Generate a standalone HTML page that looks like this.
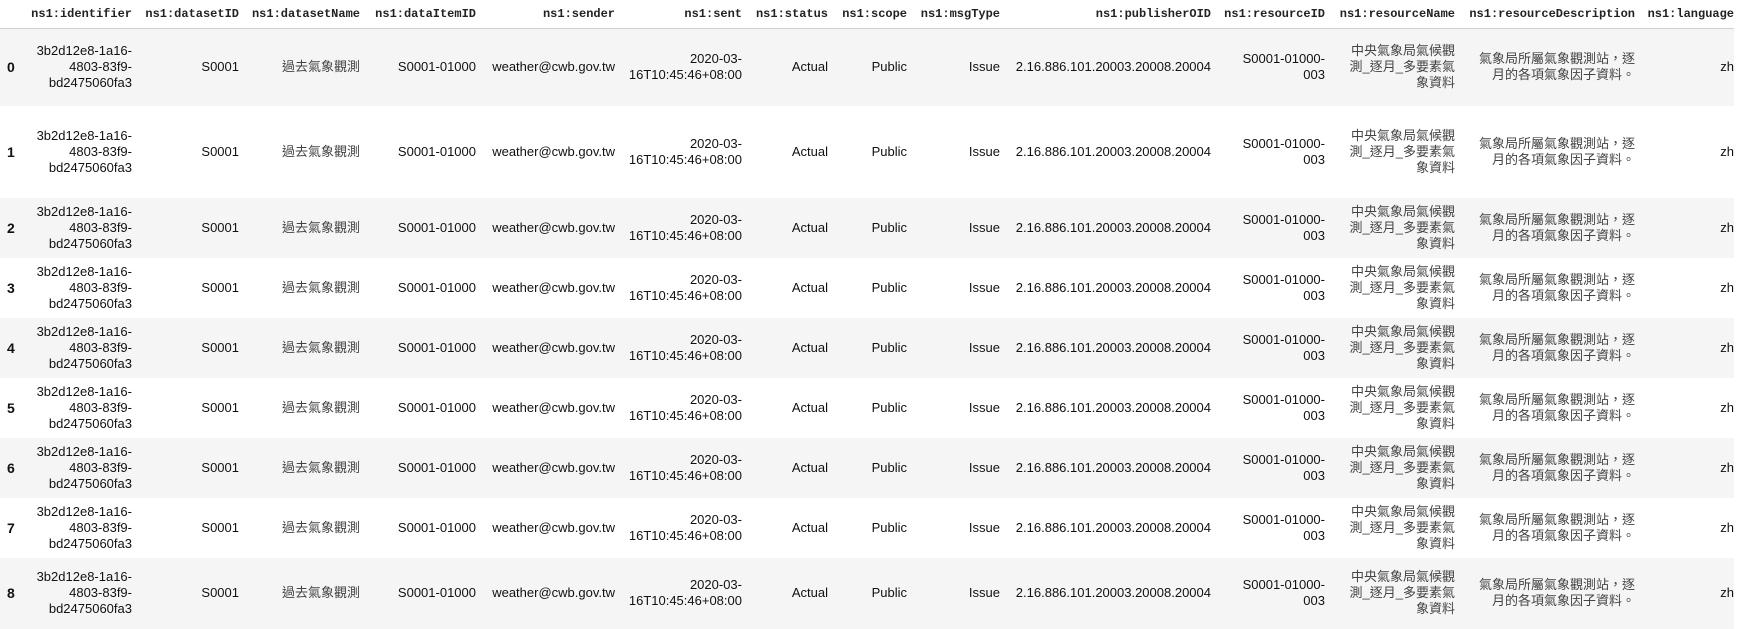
<!DOCTYPE html>
<html><head><meta charset="utf-8"><style>
body{margin:0;background:#fff;width:1745px;height:628px;overflow:hidden}
table{border-collapse:collapse;table-layout:fixed;width:1734px;font-family:"Liberation Sans","Noto Sans CJK TC",sans-serif;font-size:13px;line-height:16px;color:#111}
th{font-family:"Liberation Mono",monospace;font-size:12px;font-weight:bold;text-align:right;height:28px;padding:0;white-space:nowrap;border-bottom:1px solid #d0d0d0;vertical-align:middle;color:#222}
td{text-align:right;padding:0;white-space:nowrap;vertical-align:middle}
td.i{text-align:left;padding-left:7px;font-weight:bold;font-size:14px}
tbody tr:nth-child(odd){background:#f5f5f5}
.c{font-size:13px;color:#444}
</style></head><body>
<table>
<colgroup><col style="width:20px"><col style="width:112px"><col style="width:107px"><col style="width:121px"><col style="width:116px"><col style="width:139px"><col style="width:127px"><col style="width:86px"><col style="width:79px"><col style="width:93px"><col style="width:211px"><col style="width:114px"><col style="width:130px"><col style="width:180px"><col style="width:99px"></colgroup>
<thead><tr><th></th><th>ns1:identifier</th><th>ns1:datasetID</th><th>ns1:datasetName</th><th>ns1:dataItemID</th><th>ns1:sender</th><th>ns1:sent</th><th>ns1:status</th><th>ns1:scope</th><th>ns1:msgType</th><th>ns1:publisherOID</th><th>ns1:resourceID</th><th>ns1:resourceName</th><th>ns1:resourceDescription</th><th>ns1:language</th></tr></thead>
<tbody>
<tr style="height:77px"><td class="i">0</td><td>3b2d12e8-1a16-<br>4803-83f9-<br>bd2475060fa3</td><td>S0001</td><td class="c">過去氣象觀測</td><td>S0001-01000</td><td>weather@cwb.gov.tw</td><td>2020-03-<br>16T10:45:46+08:00</td><td>Actual</td><td>Public</td><td>Issue</td><td>2.16.886.101.20003.20008.20004</td><td>S0001-01000-<br>003</td><td class="c">中央氣象局氣候觀<br>測_逐月_多要素氣<br>象資料</td><td class="c">氣象局所屬氣象觀測站，逐<br>月的各項氣象因子資料。</td><td>zh</td></tr>
<tr style="height:92px"><td class="i">1</td><td>3b2d12e8-1a16-<br>4803-83f9-<br>bd2475060fa3</td><td>S0001</td><td class="c">過去氣象觀測</td><td>S0001-01000</td><td>weather@cwb.gov.tw</td><td>2020-03-<br>16T10:45:46+08:00</td><td>Actual</td><td>Public</td><td>Issue</td><td>2.16.886.101.20003.20008.20004</td><td>S0001-01000-<br>003</td><td class="c">中央氣象局氣候觀<br>測_逐月_多要素氣<br>象資料</td><td class="c">氣象局所屬氣象觀測站，逐<br>月的各項氣象因子資料。</td><td>zh</td></tr>
<tr style="height:60px"><td class="i">2</td><td>3b2d12e8-1a16-<br>4803-83f9-<br>bd2475060fa3</td><td>S0001</td><td class="c">過去氣象觀測</td><td>S0001-01000</td><td>weather@cwb.gov.tw</td><td>2020-03-<br>16T10:45:46+08:00</td><td>Actual</td><td>Public</td><td>Issue</td><td>2.16.886.101.20003.20008.20004</td><td>S0001-01000-<br>003</td><td class="c">中央氣象局氣候觀<br>測_逐月_多要素氣<br>象資料</td><td class="c">氣象局所屬氣象觀測站，逐<br>月的各項氣象因子資料。</td><td>zh</td></tr>
<tr style="height:60px"><td class="i">3</td><td>3b2d12e8-1a16-<br>4803-83f9-<br>bd2475060fa3</td><td>S0001</td><td class="c">過去氣象觀測</td><td>S0001-01000</td><td>weather@cwb.gov.tw</td><td>2020-03-<br>16T10:45:46+08:00</td><td>Actual</td><td>Public</td><td>Issue</td><td>2.16.886.101.20003.20008.20004</td><td>S0001-01000-<br>003</td><td class="c">中央氣象局氣候觀<br>測_逐月_多要素氣<br>象資料</td><td class="c">氣象局所屬氣象觀測站，逐<br>月的各項氣象因子資料。</td><td>zh</td></tr>
<tr style="height:60px"><td class="i">4</td><td>3b2d12e8-1a16-<br>4803-83f9-<br>bd2475060fa3</td><td>S0001</td><td class="c">過去氣象觀測</td><td>S0001-01000</td><td>weather@cwb.gov.tw</td><td>2020-03-<br>16T10:45:46+08:00</td><td>Actual</td><td>Public</td><td>Issue</td><td>2.16.886.101.20003.20008.20004</td><td>S0001-01000-<br>003</td><td class="c">中央氣象局氣候觀<br>測_逐月_多要素氣<br>象資料</td><td class="c">氣象局所屬氣象觀測站，逐<br>月的各項氣象因子資料。</td><td>zh</td></tr>
<tr style="height:60px"><td class="i">5</td><td>3b2d12e8-1a16-<br>4803-83f9-<br>bd2475060fa3</td><td>S0001</td><td class="c">過去氣象觀測</td><td>S0001-01000</td><td>weather@cwb.gov.tw</td><td>2020-03-<br>16T10:45:46+08:00</td><td>Actual</td><td>Public</td><td>Issue</td><td>2.16.886.101.20003.20008.20004</td><td>S0001-01000-<br>003</td><td class="c">中央氣象局氣候觀<br>測_逐月_多要素氣<br>象資料</td><td class="c">氣象局所屬氣象觀測站，逐<br>月的各項氣象因子資料。</td><td>zh</td></tr>
<tr style="height:60px"><td class="i">6</td><td>3b2d12e8-1a16-<br>4803-83f9-<br>bd2475060fa3</td><td>S0001</td><td class="c">過去氣象觀測</td><td>S0001-01000</td><td>weather@cwb.gov.tw</td><td>2020-03-<br>16T10:45:46+08:00</td><td>Actual</td><td>Public</td><td>Issue</td><td>2.16.886.101.20003.20008.20004</td><td>S0001-01000-<br>003</td><td class="c">中央氣象局氣候觀<br>測_逐月_多要素氣<br>象資料</td><td class="c">氣象局所屬氣象觀測站，逐<br>月的各項氣象因子資料。</td><td>zh</td></tr>
<tr style="height:60px"><td class="i">7</td><td>3b2d12e8-1a16-<br>4803-83f9-<br>bd2475060fa3</td><td>S0001</td><td class="c">過去氣象觀測</td><td>S0001-01000</td><td>weather@cwb.gov.tw</td><td>2020-03-<br>16T10:45:46+08:00</td><td>Actual</td><td>Public</td><td>Issue</td><td>2.16.886.101.20003.20008.20004</td><td>S0001-01000-<br>003</td><td class="c">中央氣象局氣候觀<br>測_逐月_多要素氣<br>象資料</td><td class="c">氣象局所屬氣象觀測站，逐<br>月的各項氣象因子資料。</td><td>zh</td></tr>
<tr style="height:71px"><td class="i">8</td><td>3b2d12e8-1a16-<br>4803-83f9-<br>bd2475060fa3</td><td>S0001</td><td class="c">過去氣象觀測</td><td>S0001-01000</td><td>weather@cwb.gov.tw</td><td>2020-03-<br>16T10:45:46+08:00</td><td>Actual</td><td>Public</td><td>Issue</td><td>2.16.886.101.20003.20008.20004</td><td>S0001-01000-<br>003</td><td class="c">中央氣象局氣候觀<br>測_逐月_多要素氣<br>象資料</td><td class="c">氣象局所屬氣象觀測站，逐<br>月的各項氣象因子資料。</td><td>zh</td></tr>
</tbody></table>
</body></html>
